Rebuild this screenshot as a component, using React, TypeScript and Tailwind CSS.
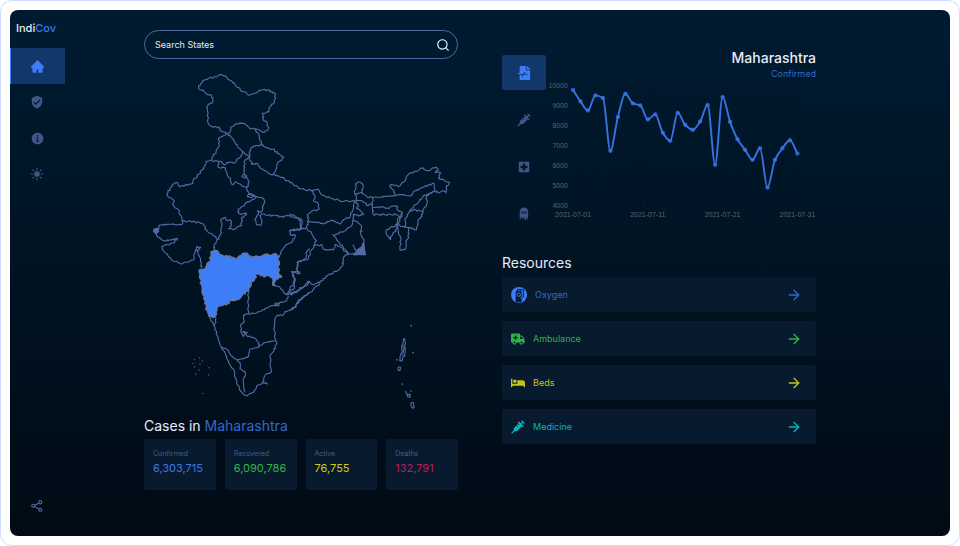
import { useState, type ReactNode } from "react";
import { IoInformationCircle, IoSunny } from "react-icons/io5";
import { AiFillHome } from "react-icons/ai";
import { BiShareAlt } from "react-icons/bi";
import { FaAmbulance, FaBed, FaFileMedicalAlt } from "react-icons/fa";
import { MdLocalHospital, MdVerifiedUser } from "react-icons/md";
import { RiSearchLine } from "react-icons/ri";
import { GiTombstone } from "react-icons/gi";
import { FiArrowRight } from "react-icons/fi";

type Point = [number, number];

// --- map data ---------------------------------------------------------------

const NORTH = [
  "183,68 193,58 212,50 220,52 237,43 258,46 264,56 278,66 300,82 304,92 316,94 324,103 340,100 358,88 375,86 396,92 407,100 403,125 390,138 386,154 368,157 370,178 382,188 385,205 370,215 358,208 347,204 332,205 318,192 300,186 285,190 272,200 270,214 262,220 240,210 238,200 220,200 206,190 202,165 200,140 207,130 218,124 215,104 197,98 190,88 176,85 176,75 183,68",
  "262,220 272,228 282,238 286,250 296,262 305,270 315,280 328,288",
  "347,204 350,215 358,225 360,240 368,252 355,256 340,256 332,262 330,275 328,288",
  "262,220 250,225 236,233 238,255 228,275 216,290 215,300 225,300 240,302 252,312 265,306 285,306 290,295 303,288 307,272",
  "235,303 235,320 256,322 262,345 272,355 278,372 285,364 300,370 310,378 325,376 325,360 316,345",
  "328,288 314,300 312,325 314,340 320,346 314,352 306,348 314,340",
  "368,252 385,262 400,265 412,278 431,291 414,305 410,322 402,342 385,338 370,328 358,318 348,308 336,312 330,300 328,288",
  "402,342 425,350 450,366 470,375 485,385 515,390 535,386 545,403 570,412 600,420 630,423 647,422",
  "213,298 198,302 190,325 172,343 155,370 130,375 118,378 112,366 100,370 80,400 84,408 102,418 98,432 118,450 128,482",
  "128,482 160,482 185,488 192,495 200,508 218,523 232,537 225,550 220,572",
  "232,537 245,517 243,475 255,470 262,480 272,478 275,495 266,505 285,505 305,495 305,470 320,460 296,458 294,445 315,430 335,418 350,408",
  "325,376 320,385 326,400 335,404 350,408 368,412 374,425 368,445 362,455 352,450 355,462 345,475 350,492 362,494 366,482 360,465 365,460 385,464 410,465 430,470 450,462 470,470 482,480 484,505 470,508 448,510",
  "324,402 336,400 346,407 330,410 322,408 324,402",
];

const EAST = [
  "65,150 75,165 70,180 85,190 88,205 65,212 52,222 55,240 50,262 35,265",
  "0,225 15,232 35,238 35,265 0,268",
  "55,243 80,245 100,250 125,238 150,250 165,235 180,230 187,210 190,195 197,182",
  "50,262 65,275 70,290 80,300 72,315 95,312 100,325 130,328 135,312 150,318 165,332 178,340",
  "187,238 185,255 165,270 145,280 128,282 140,298 150,312 165,325 178,340",
  "197,182 205,195 200,204 222,220 204,226 190,220 192,240 205,248 215,262 212,280 222,300 225,340 200,342 178,340",
  "188,313 194,325 200,342 206,326 214,342",
  "200,182 195,160 196,130 208,124 218,130 217,155 205,158 195,160",
  "217,155 230,168 247,170 280,168 315,165 365,163 375,150 400,140 432,128 434,150 415,160 400,165 385,185 370,200 358,212",
  "200,182 215,180 235,195 247,190 247,170",
  "247,190 247,198 265,198 290,202 320,195 322,208 337,215 330,228 320,222 250,222 247,195",
  "315,165 312,150 300,140 300,133 325,138 345,120 352,105 375,92 395,82 412,90 438,80 445,90 436,96 452,97 445,112 478,125 470,135 468,158 460,150 450,155 432,152",
  "432,152 410,165 410,190 398,212 370,207 358,212 345,240 345,258 380,267 384,245 396,225 398,212",
  "330,228 322,236 322,250 325,275 332,300 330,327 345,327 348,305 356,290 355,262",
  "337,215 325,250 345,262",
  "322,250 300,262 288,270 292,285 302,297 308,280 318,272 322,250",
  "72,315 60,335 55,355 22,365 22,390 30,398 8,395 15,420 0,445 -10,460",
  "178,340 160,350 158,375 140,392 115,402 90,425 60,455 25,480 15,500 0,508",
  "90,425 70,432 58,422 40,438 20,450 0,462",
];

const SOUTH = [
  "448,15 450,27 467,29 455,50 435,60 425,75 418,95",
  "510,70 500,78 498,100 472,110 474,140 455,138 466,160 462,190 440,207",
  "404,178 420,185 430,200 440,207 455,203 470,200 490,185 510,170",
  "325,265 350,262 385,245 410,235 440,225 445,210",
  "406,232 418,232 416,241 406,240 406,232",
  "510,200 490,215 470,235 468,245 450,253 435,258 428,270 412,268 405,277 402,300 406,340 410,352 400,378 390,390 393,440 378,445 368,468 382,475 368,472 350,482 340,500 322,510 305,500 290,470 280,430 265,405 245,365 232,330 222,300 208,275",
  "405,345 380,350 360,358 355,365 330,370 322,395 305,400 290,402",
  "325,190 325,265 310,268 312,290 303,295 303,320 310,332 322,320 308,318 320,330 340,335 355,350 355,365",
  "245,365 262,372 270,385 290,402",
  "290,402 300,410 300,430 316,440 310,470 315,500",
  "222,300 228,290 226,275",
  "128,-13 125,-3 95,-5 60,-2 55,10 42,15 50,30 70,45 95,43 112,38 100,52 65,62 70,75 95,103 125,115 160,103 165,80 170,62 182,65 170,75 178,90 182,110 185,128",
];

const MAHARASHTRA =
  "180,130 196,130 200,115 212,105 208,97 218,90 212,78 232,75 238,85 250,90 280,94 290,102 305,85 322,82 326,93 345,92 370,88 410,86 416,95 416,145 425,155 408,162 404,180 398,172 395,152 370,152 350,145 345,158 332,170 330,185 310,205 290,222 270,225 268,234 250,238 230,248 228,270 218,276 205,270 198,245 190,210 185,180 178,150 180,130";

const LAKSHADWEEP: Point[] = [
  [163, 401], [179, 397], [187, 406], [159, 413], [180, 415], [164, 424], [177, 433], [167, 445], [207, 426], [206, 448], [188, 503],
];

const ANDAMAN = [
  "73,68 76,82 73,90 76,100 74,122 70,120 66,136 59,134 62,115 66,108 65,90 69,86 70,72 73,68",
  "68,92 73,98 70,108 66,118",
  "55,154 61,154 60,164 55,164 55,154",
  "76,226 79,233 84,238 90,235 91,244 84,244 80,236",
  "95,260 101,262 102,275 98,278 93,268 95,260",
];

const ANDAMAN_DOTS: Point[] = [[93, 30], [99, 111], [51, 132], [67, 205], [93, 226]];

function parse(line: string): Point[] {
  return line.split(" ").map((p) => p.split(",").map(Number) as Point);
}

// Breaks each segment into short steps and nudges them, so borders read as surveyed lines
function border(line: string, amount = 2.4) {
  const pts = parse(line);
  let d = `M${pts[0][0]} ${pts[0][1]}`;
  for (let i = 1; i < pts.length; i++) {
    const [ax, ay] = pts[i - 1];
    const [bx, by] = pts[i];
    const steps = Math.max(1, Math.round(Math.hypot(bx - ax, by - ay) / 5));
    for (let s = 1; s <= steps; s++) {
      const x = ax + ((bx - ax) * s) / steps;
      const y = ay + ((by - ay) * s) / steps;
      const n = s === steps ? 0 : amount;
      const nx = Math.sin(x * 12.9 + y * 78.2) * n;
      const ny = Math.cos(x * 39.3 + y * 11.1) * n;
      d += `L${(x + nx).toFixed(1)} ${(y + ny).toFixed(1)}`;
    }
  }
  return d;
}

function IndiaMap() {
  return (
    <svg viewBox="12 28 942 1020" className="mt-[11px] block w-full" role="img" aria-label="Map of India">
      <g fill="none" stroke="#526ba3" strokeWidth="3.4" strokeLinejoin="round">
        {NORTH.map((l) => <path key={l} d={border(l)} />)}
        <g transform="translate(450 240)">
          {EAST.map((l) => <path key={l} d={border(l)} />)}
          <path d="M192 341L205 325L214 320L220 306L226 342Z" fill="#526ba3" />
        </g>
        <g transform="translate(0 495)">
          {SOUTH.map((l) => <path key={l} d={border(l, 1.8)} />)}
          <path d="M42 10L54 8L56 18L48 24L41 18Z" fill="#526ba3" />
          <path d={border(MAHARASHTRA, 3)} fill="#3d7ef8" stroke="#6b7894" />
        </g>
        <g transform="translate(720 765)">
          {ANDAMAN.map((l) => <path key={l} d={border(l, 1)} />)}
        </g>
      </g>
      <g fill="#526ba3">
        {LAKSHADWEEP.map(([x, y]) => <circle key={`${x}-${y}`} cx={x} cy={y + 495} r="2" />)}
        {ANDAMAN_DOTS.map(([x, y]) => <circle key={`${x}-${y}`} cx={x + 720} cy={y + 765} r="2.6" />)}
      </g>
    </svg>
  );
}

// --- chart ------------------------------------------------------------------

const CASES = [
  9760, 9180, 8730, 9480, 9350, 6710, 8400, 9560, 9080, 8980, 8280, 8530, 7610, 7210, 8610, 8010, 7760, 8180, 9000, 6010,
  9400, 8160, 7290, 6760, 6260, 6840, 4870, 6260, 6840, 7240, 6570,
];
const Y_TICKS = [10000, 9000, 8000, 7000, 6000, 5000, 4000];
const X_TICKS = [1, 11, 21, 31];

const xAt = (day: number) => 27 + (day - 1) * 7.48;
const yAt = (value: number) => 4 + (10000 - value) * 0.02;

function smoothLine(values: number[]) {
  const pts = values.map((v, i) => [xAt(i + 1), yAt(v)]);
  const step = xAt(2) - xAt(1);
  const slope = pts.map((_, i) => {
    if (i === 0) return (pts[1][1] - pts[0][1]) / step;
    if (i === pts.length - 1) return (pts[i][1] - pts[i - 1][1]) / step;
    const before = (pts[i][1] - pts[i - 1][1]) / step;
    const after = (pts[i + 1][1] - pts[i][1]) / step;
    return before * after <= 0 ? 0 : (2 * before * after) / (before + after);
  });
  let d = `M${pts[0][0]} ${pts[0][1]}`;
  for (let i = 1; i < pts.length; i++) {
    const [ax, ay] = pts[i - 1];
    const [bx, by] = pts[i];
    const h = step / 3;
    d += `C${ax + h} ${ay + slope[i - 1] * h} ${bx - h} ${by - slope[i] * h} ${bx} ${by}`;
  }
  return d;
}

function CasesChart() {
  return (
    <svg viewBox="0 0 270 139" className="block w-full" role="img" aria-label="Confirmed cases in July 2021">
      <g stroke="#000" strokeOpacity="0.08">
        {Y_TICKS.map((t) => <line key={t} x1="24" x2="252" y1={yAt(t)} y2={yAt(t)} />)}
        {CASES.map((_, i) => <line key={i} x1={xAt(i + 1)} x2={xAt(i + 1)} y1="4" y2="127" />)}
      </g>
      <g className="fill-[#5c6269] font-['Liberation_Sans',sans-serif] text-[7px]">
        {Y_TICKS.map((t) => <text key={t} x="22" y={yAt(t) + 3} textAnchor="end">{t}</text>)}
        {X_TICKS.map((t) => (
          <text key={t} x={xAt(t)} y="136" textAnchor="middle">{`2021-07-${String(t).padStart(2, "0")}`}</text>
        ))}
      </g>
      <path d={smoothLine(CASES)} fill="none" stroke="#3872e2" strokeWidth="1.9" />
      <g fill="#3d7ef8" fillOpacity="0.5" stroke="#3872e2" strokeWidth="0.9">
        {CASES.map((v, i) => <circle key={i} cx={xAt(i + 1)} cy={yAt(v)} r="1.7" />)}
      </g>
    </svg>
  );
}

// --- page -------------------------------------------------------------------

function OxygenIcon() {
  return (
    <svg viewBox="0 0 24 24" className="size-4">
      <circle cx="12" cy="12" r="12" fill="#3d7ef8" />
      <path d="M7 23V9q0-3 2-4V3h6v3q1 1 1 3v14Z" fill="#081a2d" />
      <circle cx="11.5" cy="11.5" r="2.6" fill="none" stroke="#3d7ef8" strokeWidth="1.5" />
      <path d="M14 15.5h1.5V18M10 5h4" stroke="#3d7ef8" strokeWidth="1.3" fill="none" />
      <path d="M15 4h3.5v11L17 17" fill="none" stroke="#081a2d" strokeWidth="1.5" />
    </svg>
  );
}

function SyringeIcon() {
  return (
    <svg viewBox="0 0 24 24" className="size-[14px]" fill="none" stroke="currentColor">
      <path d="M1 23L6 18" strokeWidth="2" />
      <path d="M4.500 19.500L5 13.500L14 4.500L19.500 10L10.500 19Z" fill="currentColor" stroke="none" />
      <path d="M12.500 3L21 11.500M16.500 7.500L20.500 3.500M18 1L23 6" strokeWidth="2.200" />
      <path d="M9 9.500L11.500 12M12 6.500L14.500 9" stroke="#04172b" strokeWidth="1.200" />
    </svg>
  );
}

const NAV: { label: string; icon: ReactNode }[] = [
  { label: "Home", icon: <AiFillHome className="size-[15px]" /> },
  { label: "Vaccination", icon: <MdVerifiedUser /> },
  { label: "About", icon: <IoInformationCircle className="size-[15px]" /> },
  { label: "Theme", icon: <IoSunny /> },
];

const SERIES: { label: string; icon: ReactNode }[] = [
  { label: "Confirmed", icon: <FaFileMedicalAlt /> },
  { label: "Vaccinated", icon: <SyringeIcon /> },
  { label: "Recovered", icon: <MdLocalHospital /> },
  { label: "Deaths", icon: <GiTombstone /> },
];

const STATS = [
  { label: "Confirmed", value: "6,303,715", color: "text-[#3b78ea]" },
  { label: "Recovered", value: "6,090,786", color: "text-[#30b847]" },
  { label: "Active", value: "76,755", color: "text-[#d0ce1c]" },
  { label: "Deaths", value: "132,791", color: "text-[#bd1c5c]" },
];

const RESOURCES: { label: string; icon: ReactNode; color: string }[] = [
  { label: "Oxygen", icon: <OxygenIcon />, color: "text-[#3468ca]" },
  { label: "Ambulance", icon: <FaAmbulance className="size-[14px]" />, color: "text-[#2fb344]" },
  { label: "Beds", icon: <FaBed className="size-[14px]" />, color: "text-[#c5c31c]" },
  { label: "Medicine", icon: <SyringeIcon />, color: "text-[#08b4c0]" },
];

export default function App() {
  const [page, setPage] = useState("Home");
  const [series, setSeries] = useState("Confirmed");

  return (
    <div className="flex min-h-screen rounded-xl border border-[#cfdcfb] bg-white p-[9px] font-['Inter',sans-serif]">
      <div className="flex flex-1 overflow-hidden rounded-lg bg-linear-to-b from-[#001b31] to-[#000b15] text-[#e4ecfb]">
        <aside className="flex w-[55px] shrink-0 flex-col pb-3">
          <h1 className="pt-2 pb-[10px] pl-[6px] text-[11px] leading-5 font-medium">
            Indi<span className="text-[#3b78ea]">Cov</span>
          </h1>
          <nav className="flex flex-col">
            {NAV.map(({ label, icon }) => (
              <button
                key={label}
                aria-label={label}
                onClick={() => setPage(label)}
                className={
                  page === label
                    ? "flex h-9 items-center justify-center border-l border-[#3d7ef8] bg-[#12376b] pr-0.5 text-sm text-[#3d7ef8]"
                    : "flex h-9 items-center justify-center pr-px text-sm text-[#405785]"
                }
              >
                {icon}
              </button>
            ))}
          </nav>
          <button aria-label="Share" className="mt-auto flex h-9 items-center justify-center pr-px text-sm text-[#4b649a]">
            <BiShareAlt />
          </button>
        </aside>

        <main className="grid flex-1 grid-cols-2 gap-11 pt-5 pr-[134px] pl-[79px]">
          <section className="min-w-0">
            <label className="flex h-[29px] items-center rounded-full border border-[#4d699f] pr-[7px] pl-[10px]">
              <input
                type="search"
                aria-label="Search States"
                placeholder="Search States"
                className="min-w-0 flex-1 bg-transparent text-[9px] outline-none placeholder:text-[#e4ecfb]"
              />
              <RiSearchLine className="size-[14px]" />
            </label>

            <IndiaMap />

            <h2 className="mt-[6px] text-sm leading-5">
              Cases in <span className="text-[#3468ca]">Maharashtra</span>
            </h2>
            <dl className="mt-[3px] grid grid-cols-4 gap-[9px]">
              {STATS.map(({ label, value, color }) => (
                <div key={label} className="h-[51px] rounded-xs bg-[#081a2d] pt-[10px] pl-[9px]">
                  <dt className="text-[7px] leading-[10px] text-[#465d8c]">{label}</dt>
                  <dd className={`text-[11px] leading-[18px] ${color}`}>{value}</dd>
                </div>
              ))}
            </dl>
          </section>

          <section className="min-w-0 pt-[19px]">
            <div className="flex">
              <div className="flex w-11 shrink-0 flex-col gap-3 pt-[6px]">
                {SERIES.map(({ label, icon }) => (
                  <button
                    key={label}
                    aria-label={label}
                    onClick={() => setSeries(label)}
                    className={
                      series === label
                        ? "flex h-[35px] items-center justify-center rounded-xs bg-[#12376b] text-sm text-[#3d7ef8]"
                        : "flex h-[35px] items-center justify-center text-sm text-[#405785]"
                    }
                  >
                    {icon}
                  </button>
                ))}
              </div>
              <div className="min-w-0 flex-1">
                <h2 className="text-right text-sm leading-[18px] font-medium">Maharashtra</h2>
                <p className="text-right text-[9px] leading-[14px] text-[#3468ca]">{series}</p>
                <CasesChart />
              </div>
            </div>

            <h2 className="mt-[22px] text-sm leading-5">Resources</h2>
            <ul className="mt-1 flex flex-col gap-[9px]">
              {RESOURCES.map(({ label, icon, color }) => (
                <li key={label}>
                  <a href={`#${label.toLowerCase()}`} className={`flex h-[35px] items-center gap-2 rounded-xs bg-[#081a2d] pr-[14px] pl-[9px] text-[9px] ${color}`}>
                    {icon}
                    {label}
                    <FiArrowRight className="ml-auto size-4" />
                  </a>
                </li>
              ))}
            </ul>
          </section>
        </main>
      </div>
    </div>
  );
}
